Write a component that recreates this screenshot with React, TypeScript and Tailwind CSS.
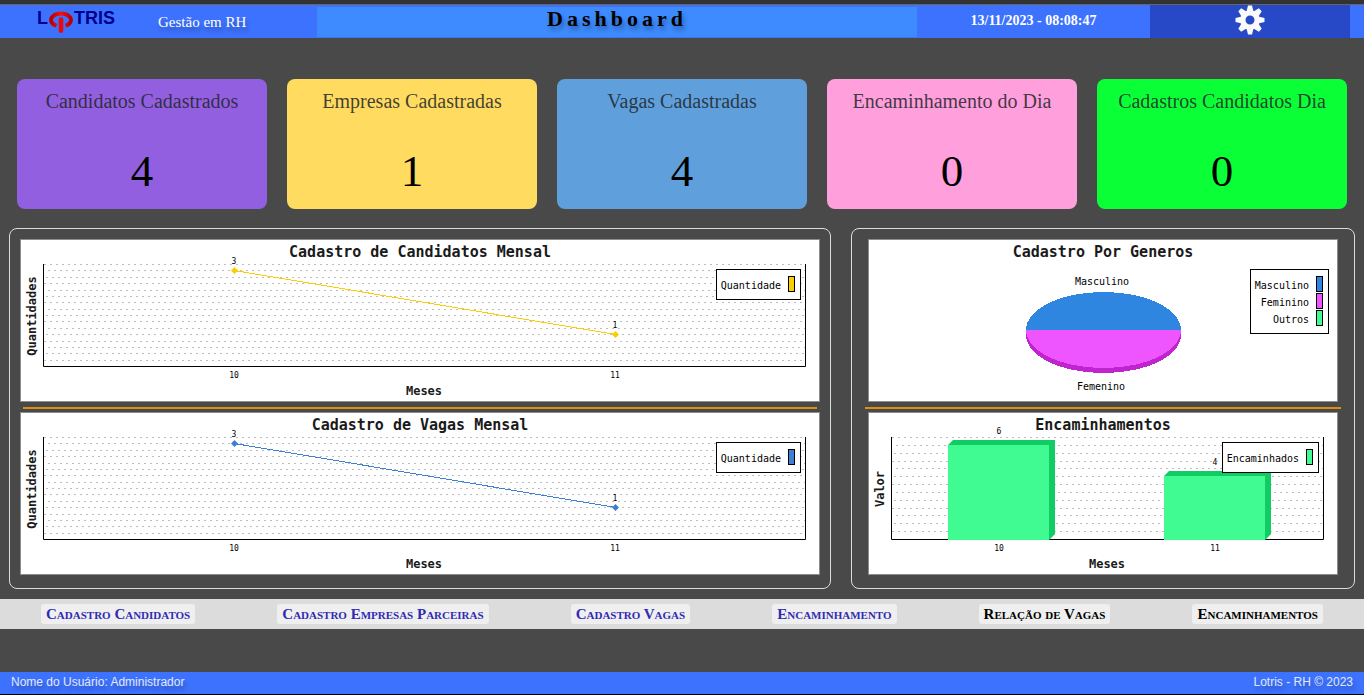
import React from "react";

const stats = [
  { title: "Candidatos Cadastrados", value: 4, bg: "bg-[#925fe0]" },
  { title: "Empresas Cadastradas", value: 1, bg: "bg-[#ffdb60]" },
  { title: "Vagas Cadastradas", value: 4, bg: "bg-[#5f9fdc]" },
  { title: "Encaminhamento do Dia", value: 0, bg: "bg-[#ff9fdc]" },
  { title: "Cadastros Candidatos Dia", value: 0, bg: "bg-[#0aff37]" },
];

const actions = [
  { label: "Cadastro Candidatos", color: "text-[#2f2bb5]" },
  { label: "Cadastro Empresas Parceiras", color: "text-[#2f2bb5]" },
  { label: "Cadastro Vagas", color: "text-[#2f2bb5]" },
  { label: "Encaminhamento", color: "text-[#2f2bb5]" },
  { label: "Relação de Vagas", color: "text-black" },
  { label: "Encaminhamentos", color: "text-black" },
];

const titleText = "fill-[#1a1a1a] text-[15px] font-bold";
const axisText = "fill-[#1a1a1a] text-[12px] font-bold";
const labelText = "fill-black text-[10px]";
const tickText = "fill-black text-[8px]";

type FrameProps = { width: number; title: string; children: React.ReactNode };

function ChartFrame({ width, title, children }: FrameProps) {
  return (
    <svg
      viewBox={`0 0 ${width} 163`}
      className="block w-full font-['DejaVu_Sans_Mono','Liberation_Mono',monospace]"
      role="img"
      aria-label={title}
    >
      <rect x="0.5" y="0.5" width={width - 1} height="162" fill="#fff" stroke="#8c8c8c" />
      {children}
      <text x={width / 2} y="18" textAnchor="middle" className={titleText}>
        {title}
      </text>
    </svg>
  );
}

type PlotProps = { right: number; grid: number[]; yLabel: string; ticks: [number, string][] };

function Plot({ right, grid, yLabel, ticks }: PlotProps) {
  return (
    <g>
      {grid.map((y, i) => (
        <line
          key={y}
          x1="24"
          x2={right}
          y1={y + 0.5}
          y2={y + 0.5}
          stroke="#bdbdbd"
          strokeDasharray="2 4"
          strokeDashoffset={(i * 2) % 6}
        />
      ))}
      <path d={`M23.5 25V127.5H${right + 0.5}V25`} fill="none" stroke="#000" />
      {ticks.map(([x, label]) => (
        <text key={label} x={x} y="139" textAnchor="middle" className={tickText}>
          {label}
        </text>
      ))}
      <text x={(right + 23) / 2} y="156" textAnchor="middle" className={axisText}>
        Meses
      </text>
      <text transform="translate(16 77) rotate(-90)" textAnchor="middle" className={axisText}>
        {yLabel}
      </text>
    </g>
  );
}

type LegendProps = { x: number; width: number; items: { label: string; color: string }[] };

function Legend({ x, width, items }: LegendProps) {
  return (
    <g>
      <rect x={x + 0.5} y="30.5" width={width - 1} height={items.length * 17 + 13} fill="#fff" stroke="#000" />
      {items.map((item, i) => (
        <g key={item.label}>
          <text x={x + width - 20} y={50 + i * 17} textAnchor="end" className={labelText}>
            {item.label}
          </text>
          <rect x={x + width - 12.5} y={37.5 + i * 17} width="6" height="15" fill={item.color} stroke="#000" />
        </g>
      ))}
    </g>
  );
}

const lineGrid = [25, 31, 38, 44, 51, 57, 63, 70, 76, 82, 89, 95, 102, 108, 114, 121];
const barGrid = [25, 33, 41, 49, 56, 64, 72, 80, 88, 96, 103, 111, 119];

function LineChart({ title, color }: { title: string; color: string }) {
  return (
    <ChartFrame width={800} title={title}>
      <Plot right={785} grid={lineGrid} yLabel="Quantidades" ticks={[[214, "10"], [595, "11"]]} />
      <path d="M214.5 31.5L595.5 95.5" stroke={color} shapeRendering="crispEdges" />
      <path d="M214.5 28l3.5 3.5-3.5 3.5-3.5-3.5zM595.5 92l3.5 3.5-3.5 3.5-3.5-3.5z" fill={color} />
      <text x="214" y="25" textAnchor="middle" className={tickText}>
        3
      </text>
      <text x="595" y="89" textAnchor="middle" className={tickText}>
        1
      </text>
      <Legend x={696} width={85} items={[{ label: "Quantidade", color }]} />
    </ChartFrame>
  );
}

function GenderPie() {
  return (
    <ChartFrame width={470} title="Cadastro Por Generos">
      <g shapeRendering="crispEdges">
        <path d="M158 91V96A77.5 38 0 0 0 313 96V91Z" fill="#c024cf" />
        <path d="M158 91A77.5 38 0 0 0 313 91Z" fill="#ef55ff" />
        <path d="M158 91A77.5 38 0 0 1 313 91Z" fill="#2e86e0" />
      </g>
      <text x="234" y="46" textAnchor="middle" className={labelText}>
        Masculino
      </text>
      <text x="233" y="151" textAnchor="middle" className={labelText}>
        Femenino
      </text>
      <Legend
        x={382}
        width={79}
        items={[
          { label: "Masculino", color: "#2e86e0" },
          { label: "Feminino", color: "#ef55ff" },
          { label: "Outros", color: "#40fb91" },
        ]}
      />
    </ChartFrame>
  );
}

function Bar({ x, y }: { x: number; y: number }) {
  return (
    <g>
      <path d={`M${x} ${y}L${x + 5} ${y - 5}H${x + 107}V122L${x + 101} 128V${y}Z`} fill="#10cc62" />
      <rect x={x} y={y} width="101" height={128 - y} fill="#40fb91" />
    </g>
  );
}

function ReferralBars() {
  return (
    <ChartFrame width={470} title="Encaminhamentos">
      <Plot right={455} grid={barGrid} yLabel="Valor" ticks={[[131, "10"], [347, "11"]]} />
      <Bar x={80} y={33} />
      <Bar x={296} y={64} />
      <text x="131" y="22" textAnchor="middle" className={tickText}>
        6
      </text>
      <text x="347" y="53" textAnchor="middle" className={tickText}>
        4
      </text>
      <Legend x={354} width={97} items={[{ label: "Encaminhados", color: "#40fb91" }]} />
    </ChartFrame>
  );
}

function Logo() {
  return (
    <svg viewBox="0 0 80 26" className="h-[26px] w-20" role="img" aria-label="Lotris">
      <defs>
        <linearGradient id="ring" x1="0" x2="1" y1="0" y2="0">
          <stop offset="0" stopColor="#b80000" />
          <stop offset="0.5" stopColor="#f51212" />
          <stop offset="1" stopColor="#b80000" />
        </linearGradient>
      </defs>
      <g className="fill-[#00008b] font-['Liberation_Sans',sans-serif] text-[18px] font-bold">
        <text x="0" y="15">L</text>
        <text x="37" y="15">TRIS</text>
      </g>
      <path d="M19.500 16.800A10 6.500 0 1 1 28.500 16.800" fill="none" stroke="url(#ring)" strokeWidth="3.800" />
      <path
        d="M21.700 10.500a2.300 2.300 0 0 1 4.600 0v11.500a2.300 2 0 0 1-4.600 0z"
        fill="#e80a0a"
        stroke="#3d72ff"
        strokeWidth="2"
        paintOrder="stroke"
      />
    </svg>
  );
}

function Gear() {
  const angles = [0, 45, 90, 135, 180, 225, 270, 315];
  return (
    <svg viewBox="-15 -15 30 30" className="size-[30px]" aria-hidden="true">
      <g fill="#fafafa">
        {angles.map((a) => (
          <path key={a} d="M-3.600-8L-2-14.500H2L3.600-8Z" transform={`rotate(${a})`} />
        ))}
        <path
          fillRule="evenodd"
          d="M0-9.800A9.800 9.800 0 1 1 0 9.800A9.800 9.800 0 1 1 0-9.800ZM0-4.500A4.500 4.500 0 1 0 0 4.500A4.500 4.500 0 1 0 0-4.500Z"
        />
      </g>
    </svg>
  );
}

export default function App() {
  return (
    <div className="flex min-h-screen flex-col bg-[#494949] font-['Liberation_Serif',serif] text-black">
      <header className="border-t-4 border-[#333333]">
        <div className="grid h-[34px] grid-cols-[317fr_600fr_233fr_200fr_14px] border-t border-[#666666] bg-[#3d72ff]">
          <div className="flex items-start gap-[41px] pt-1 pl-[37px]">
            <Logo />
            <span className="pt-[3px] text-[15px] leading-5 text-white [text-shadow:2px_4px_4px_rgba(0,0,0,0.3)]">
              Gestão em RH
            </span>
          </div>
          <h1 className="mt-[2px] mb-px bg-[#3d8bff] text-center text-[22px] leading-6 font-bold tracking-[4px] [text-shadow:2px_4px_4px_rgba(0,0,0,0.3)]">
            Dashboard
          </h1>
          <time className="pt-1.5 text-center text-sm font-bold text-white">13/11/2023 - 08:08:47</time>
          <button
            type="button"
            aria-label="Configurações"
            className="flex items-start justify-center bg-[#2749c7]"
          >
            <Gear />
          </button>
        </div>
      </header>

      <main className="flex flex-col">
        <section className="mt-[41px] grid grid-cols-5 gap-5 px-[17px]">
          {stats.map((s) => (
            <article key={s.title} className={`flex h-[130px] flex-col items-center rounded-lg pt-2.5 ${s.bg}`}>
              <h2 className="text-[20px] leading-6 text-[#212529]/85">{s.title}</h2>
              <p className="mt-8 text-[45px] leading-[52px]">{s.value}</p>
            </article>
          ))}
        </section>

        <section className="mt-[19px] grid grid-cols-[822fr_504fr] gap-5 px-[9px]">
          <div className="rounded-lg border border-[#dcdcdc] px-2.5 pt-2.5 pb-[13px]">
            <LineChart title="Cadastro de Candidatos Mensal" color="#f9cf00" />
            <hr className="mx-[3px] mt-[5px] mb-[3px] border-t-2 border-[#e08c0c]" />
            <LineChart title="Cadastro de Vagas Mensal" color="#3c80d4" />
          </div>
          <div className="rounded-lg border border-[#dcdcdc] px-[13px] pt-2.5 pb-[13px]">
            <div className="px-[3px]">
              <GenderPie />
            </div>
            <hr className="mt-[5px] mb-[3px] border-t-2 border-[#e08c0c]" />
            <div className="px-[3px]">
              <ReferralBars />
            </div>
          </div>
        </section>

        <nav className="mt-2.5 flex h-[30px] items-center justify-around bg-[#dcdcdc]">
          {actions.map((a) => (
            <button
              key={a.label}
              type="button"
              className={`h-5 rounded-[3px] bg-[#efefef] px-[5px] text-[15px] leading-[18px] font-bold [font-variant:small-caps] ${a.color}`}
            >
              {a.label}
            </button>
          ))}
        </nav>
      </main>

      <footer className="mt-auto flex h-[23px] justify-between border-b border-black bg-[#3d72ff] px-[11px] pt-0.5 font-['Liberation_Sans',sans-serif] text-xs leading-4 text-white/85 [text-shadow:2px_4px_4px_rgba(0,0,0,0.3)]">
        <span>Nome do Usuário: Administrador</span>
        <span>Lotris - RH © 2023</span>
      </footer>
    </div>
  );
}
